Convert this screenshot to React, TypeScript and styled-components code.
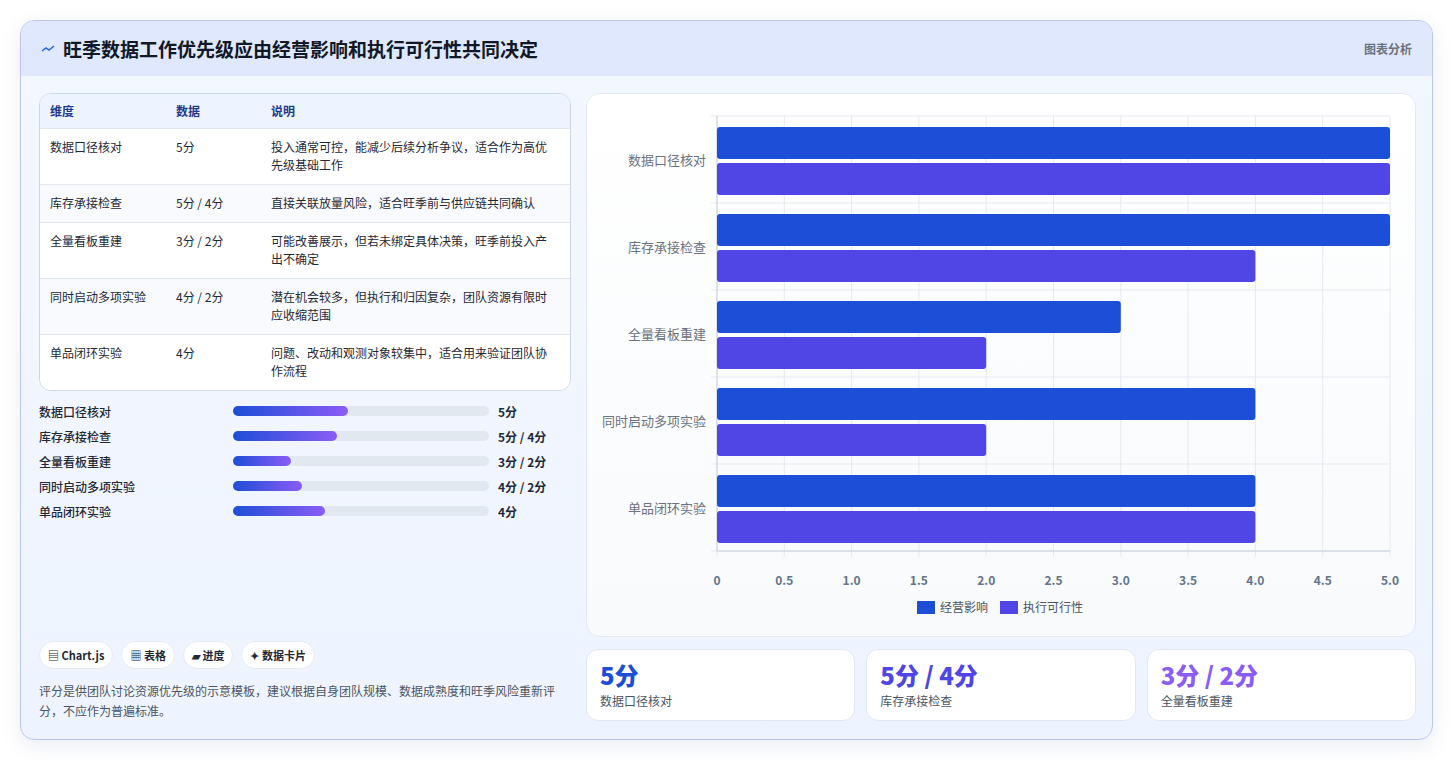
import React from 'react';
import styled, { createGlobalStyle } from 'styled-components';

const Global = createGlobalStyle`
  body { margin: 0; background: #fff; font-family: "Noto Sans CJK SC", "Noto Sans", sans-serif; }
`;

const rows = [
  { name: '数据口径核对', data: '5分', note: '投入通常可控，能减少后续分析争议，适合作为高优先级基础工作', a: 5, b: 5 },
  { name: '库存承接检查', data: '5分 / 4分', note: '直接关联放量风险，适合旺季前与供应链共同确认', a: 5, b: 4 },
  { name: '全量看板重建', data: '3分 / 2分', note: '可能改善展示，但若未绑定具体决策，旺季前投入产出不确定', a: 3, b: 2 },
  { name: '同时启动多项实验', data: '4分 / 2分', note: '潜在机会较多，但执行和归因复杂，团队资源有限时应收缩范围', a: 4, b: 2 },
  { name: '单品闭环实验', data: '4分', note: '问题、改动和观测对象较集中，适合用来验证团队协作流程', a: 4, b: 4 },
];

const Page = styled.div`
  padding: 20px 20px 20px 20px;
`;
const Card = styled.div`
  border: 1px solid #b9c6ee;
  border-radius: 14px;
  background: linear-gradient(180deg, #f3f7ff 0%, #eef4ff 100%);
  box-shadow: 0 6px 20px rgba(80, 100, 160, 0.12);
  overflow: hidden;
  height: 718px;
  display: flex;
  flex-direction: column;
`;
const Header = styled.div`
  height: 55px;
  background: #dfe8fd;
  display: flex;
  align-items: center;
  justify-content: space-between;
  padding: 0 20px;
`;
const Title = styled.h1`
  margin: 0;
  font-size: 19px;
  font-weight: 700;
  color: #111827;
  display: flex;
  align-items: center;
  gap: 8px;
`;
const Tag = styled.span`
  font-size: 12px;
  color: #6b7280;
  font-weight: 600;
`;
const Body = styled.div`
  flex: 1;
  display: grid;
  grid-template-columns: 532px 1fr;
  gap: 15px;
  padding: 17px 19px 18px 18px;
`;
const Left = styled.div`
  display: flex;
  flex-direction: column;
`;
const Table = styled.div`
  border: 1px solid #cdd6e8;
  border-radius: 12px;
  overflow: hidden;
  background: #fff;
`;
const TRow = styled.div<{ $head?: boolean; $alt?: boolean }>`
  display: grid;
  grid-template-columns: 126px 95px 1fr;
  padding: ${p => (p.$head ? '8px 10px' : '9px 10px 10px')};
  font-size: 12px;
  line-height: 18px;
  color: ${p => (p.$head ? '#1e3a8a' : '#1f2937')};
  font-weight: ${p => (p.$head ? 600 : 400)};
  background: ${p => (p.$head ? '#eef4ff' : p.$alt ? '#f8fafd' : '#fff')};
  border-top: ${p => (p.$head ? 'none' : '1px solid #e1e7f0')};
  & > span:last-child { padding-right: 6px; }
`;
const Bars = styled.div`
  margin-top: 11px;
  display: flex;
  flex-direction: column;
  gap: 7px;
`;
const BarRow = styled.div`
  display: grid;
  grid-template-columns: 194px 265px 1fr;
  align-items: center;
  gap: 0;
  font-size: 12px;
  height: 18px;
  color: #1f2937;
  font-weight: 500;
`;
const Track = styled.div`
  height: 10px;
  border-radius: 5px;
  background: #e2e8f0;
  margin-right: 9px;
`;
const Fill = styled.div`
  height: 100%;
  border-radius: 5px;
  background: linear-gradient(90deg, #1d4ed8, #8b5cf6);
`;
const Val = styled.span`
  font-weight: 700;
`;
const Spacer = styled.div`
  flex: 1;
`;
const Chips = styled.div`
  display: flex;
  gap: 8px;
`;
const Chip = styled.span`
  background: #fff;
  border: 1px solid #e5eaf3;
  border-radius: 14px;
  padding: 5px 8px;
  font-size: 11px;
  font-weight: 600;
  color: #1f2937;
`;
const Note = styled.p`
  margin: 12px 0 0;
  font-size: 12px;
  line-height: 20px;
  color: #4b5563;
`;
const Right = styled.div`
  display: flex;
  flex-direction: column;
  gap: 12px;
`;
const ChartCard = styled.div`
  height: 542px;
  background: linear-gradient(180deg, #fff, #f8fafc);
  border: 1px solid #e3e9f3;
  border-radius: 14px;
`;
const Stats = styled.div`
  display: grid;
  grid-template-columns: repeat(3, 1fr);
  gap: 11px;
`;
const Stat = styled.div`
  height: 72px;
  background: #fff;
  border: 1px solid #e0e7f2;
  border-radius: 12px;
  padding: 10px 13px;
  box-sizing: border-box;
`;
const StatVal = styled.div<{ $c: string }>`
  font-size: 24px;
  font-weight: 800;
  color: ${p => p.$c};
  line-height: 30px;
`;
const StatLabel = styled.div`
  font-size: 12px;
  color: #4b5563;
  margin-top: 2px;
`;

function Chart() {
  const x0 = 130, x1 = 803, y0 = 22, y1 = 457;
  const w = (v: number) => ((x1 - x0) * v) / 5;
  const band = (y1 - y0) / 5;
  const ticks = [0, 0.5, 1, 1.5, 2, 2.5, 3, 3.5, 4, 4.5, 5];
  return (
    <svg width="828" height="542" style={{ display: 'block' }}>
      {ticks.map(t => (
        <line key={t} x1={x0 + w(t)} x2={x0 + w(t)} y1={y0} y2={y1 + 6} stroke="#e5e9f0" />
      ))}
      {[0, 1, 2, 3, 4, 5].map(i => (
        <line key={i} x1={x0 - 6} x2={x1} y1={y0 + band * i} y2={y0 + band * i} stroke="#e5e9f0" />
      ))}
      <line x1={x0} x2={x0} y1={y0} y2={y1} stroke="#c9d0dc" />
      <line x1={x0} x2={x1} y1={y1} y2={y1} stroke="#c9d0dc" />
      {rows.map((r, i) => {
        const top = y0 + band * i;
        return (
          <g key={r.name}>
            <rect x={x0} y={top + 11} width={w(r.a)} height={32} rx={3} fill="#1d4ed8" />
            <rect x={x0} y={top + 47} width={w(r.b)} height={32} rx={3} fill="#4f46e5" />
            <text x={x0 - 11} y={top + band / 2 + 5} textAnchor="end" fontSize="13" fill="#6b7280">{r.name}</text>
          </g>
        );
      })}
      {ticks.map(t => (
        <text key={t} x={x0 + w(t)} y={491} textAnchor="middle" fontSize="12" fontWeight="600" fill="#64748b">
          {t === 0 ? '0' : t.toFixed(1)}
        </text>
      ))}
      <rect x={330} y={507} width={18} height={13} fill="#1d4ed8" />
      <text x={353} y={518} fontSize="12" fill="#4b5563">经营影响</text>
      <rect x={413} y={507} width={18} height={13} fill="#4f46e5" />
      <text x={436} y={518} fontSize="12" fill="#4b5563">执行可行性</text>
    </svg>
  );
}

export default function App() {
  return (
    <Page>
      <Global />
      <Card>
        <Header>
          <Title>
            <svg width="14" height="10" viewBox="0 0 14 10">
              <path d="M1 7 L5 4 L8 6 L13 2" stroke="#2563eb" strokeWidth="1.5" fill="none" />
            </svg>
            旺季数据工作优先级应由经营影响和执行可行性共同决定
          </Title>
          <Tag>图表分析</Tag>
        </Header>
        <Body>
          <Left>
            <Table>
              <TRow $head><span>维度</span><span>数据</span><span>说明</span></TRow>
              {rows.map((r, i) => (
                <TRow key={r.name} $alt={i % 2 === 1}>
                  <span>{r.name}</span><span>{r.data}</span><span>{r.note}</span>
                </TRow>
              ))}
            </Table>
            <Bars>
              {rows.map(r => (
                <BarRow key={r.name}>
                  <span>{r.name}</span>
                  <Track><Fill style={{ width: `${(r.a + r.b) / 2 * 9}%` }} /></Track>
                  <Val>{r.data}</Val>
                </BarRow>
              ))}
            </Bars>
            <Spacer />
            <Chips>
              <Chip>▤ Chart.js</Chip>
              <Chip>▦ 表格</Chip>
              <Chip>▰ 进度</Chip>
              <Chip>✦ 数据卡片</Chip>
            </Chips>
            <Note>评分是供团队讨论资源优先级的示意模板，建议根据自身团队规模、数据成熟度和旺季风险重新评分，不应作为普遍标准。</Note>
          </Left>
          <Right>
            <ChartCard><Chart /></ChartCard>
            <Stats>
              <Stat><StatVal $c="#1d4ed8">5分</StatVal><StatLabel>数据口径核对</StatLabel></Stat>
              <Stat><StatVal $c="#4f46e5">5分 / 4分</StatVal><StatLabel>库存承接检查</StatLabel></Stat>
              <Stat><StatVal $c="#8b5cf6">3分 / 2分</StatVal><StatLabel>全量看板重建</StatLabel></Stat>
            </Stats>
          </Right>
        </Body>
      </Card>
    </Page>
  );
}
